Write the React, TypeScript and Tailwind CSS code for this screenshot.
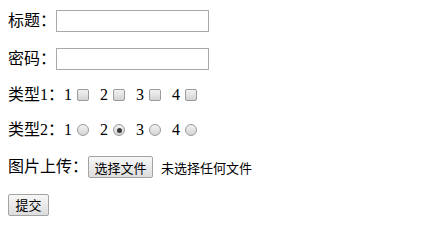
import { useState } from 'react'

const font = { fontFamily: '"Liberation Serif", "Noto Sans CJK SC", serif' }
const cjk = { fontFamily: '"Noto Sans CJK SC", sans-serif' }

function Box({ round = false, checked = false }: { round?: boolean; checked?: boolean }) {
  return (
    <span
      className={`ml-[5px] mr-[3px] inline-flex h-[12px] w-[12px] items-center justify-center border border-[#9a9a9a] bg-gradient-to-b from-[#f2f2f2] to-[#d4d4d4] ${
        round ? 'rounded-full' : 'rounded-[2px]'
      }`}
    >
      {checked && <span className="h-[5px] w-[5px] rounded-full bg-[#3a3a3a]" />}
    </span>
  )
}

function Btn({ children, className = '' }: { children: React.ReactNode; className?: string }) {
  return (
    <button
      className={`flex h-[22px] items-center justify-center rounded-[2px] border border-[#a3a3a3] bg-gradient-to-b from-[#f7f7f7] to-[#dddddd] text-[13px] text-black ${className}`}
      style={cjk}
    >
      {children}
    </button>
  )
}

export default function App() {
  const [radio] = useState(2)

  return (
    <div className="h-[229px] w-[421px] overflow-hidden bg-white pl-2 pt-[10px] text-[16px] text-black" style={font}>
      {/* title */}
      <div className="flex h-[22px] items-center leading-none">
        <span>标题：</span>
        <input className="h-[22px] w-[153px] border border-[#a9a9a9] outline-none" />
      </div>

      {/* password */}
      <div className="mt-[16px] flex h-[22px] items-center leading-none">
        <span>密码：</span>
        <input type="password" className="h-[22px] w-[153px] border border-[#a9a9a9] outline-none" />
      </div>

      {/* checkboxes */}
      <div className="mt-[14px] flex h-[22px] items-center leading-none">
        <span>类型1：</span>
        {[1, 2, 3, 4].map((n) => (
          <span key={n} className="flex items-center">
            <span>{n}</span>
            <Box />
            {n < 4 && <span className="w-[8px]" />}
          </span>
        ))}
      </div>

      {/* radios */}
      <div className="mt-[13px] flex h-[22px] items-center leading-none">
        <span>类型2：</span>
        {[1, 2, 3, 4].map((n) => (
          <span key={n} className="flex items-center">
            <span>{n}</span>
            <Box round checked={n === radio} />
            {n < 4 && <span className="w-[8px]" />}
          </span>
        ))}
      </div>

      {/* file */}
      <div className="mt-[15px] flex h-[22px] items-center leading-none">
        <span>图片上传：</span>
        <Btn className="w-[65px]">选择文件</Btn>
        <span className="ml-[8px] text-[13px]" style={cjk}>
          未选择任何文件
        </span>
      </div>

      {/* submit */}
      <div className="mt-[16px] flex">
        <Btn className="w-[41px]">提交</Btn>
      </div>
    </div>
  )
}
